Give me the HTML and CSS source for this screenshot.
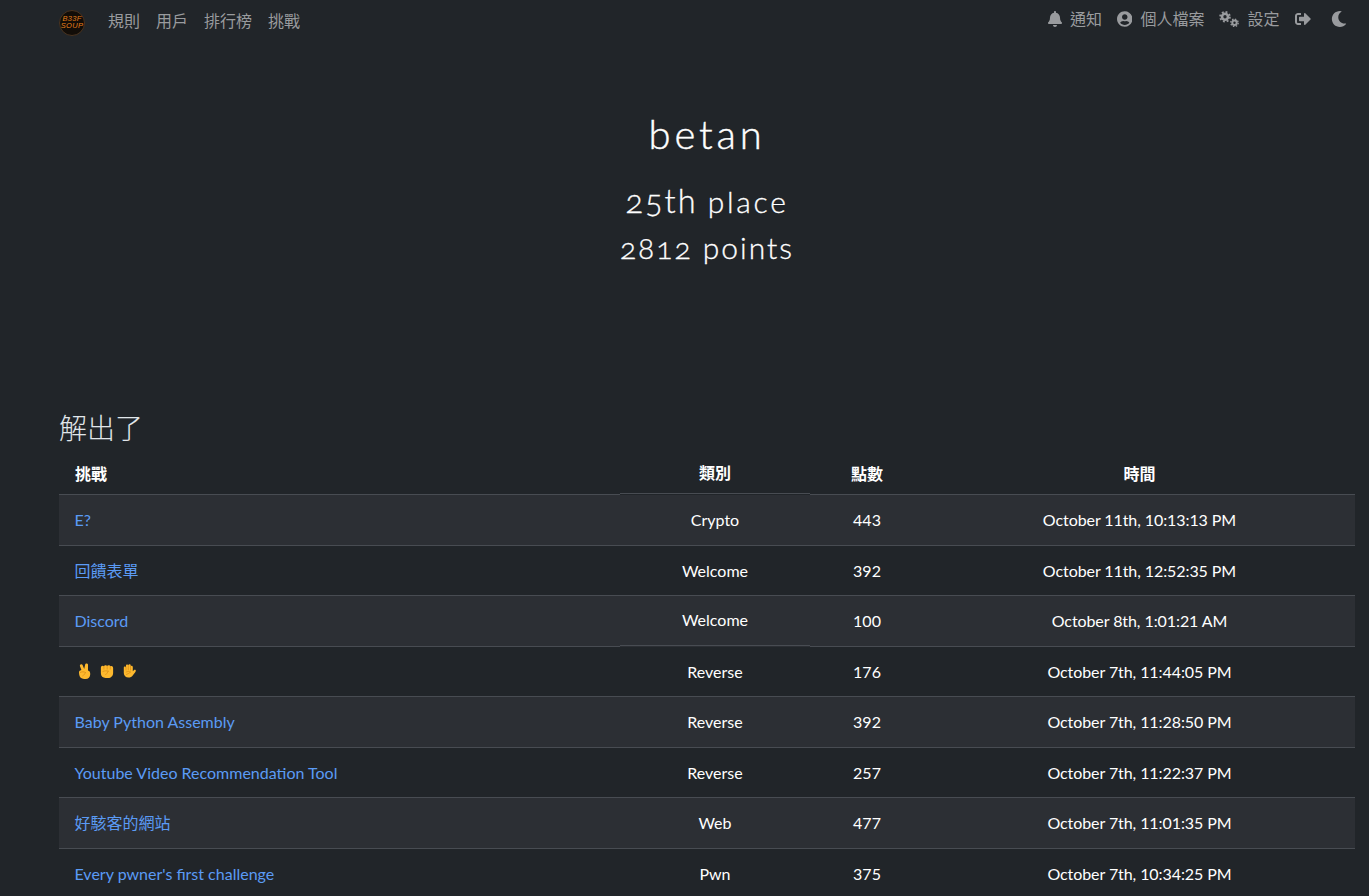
FILE: index.html
```html
<!DOCTYPE html>
<html lang="zh-Hant">
<head>
<meta charset="utf-8">
<title>betan</title>
<link rel="stylesheet" href="styles.css">
</head>
<body>
<nav class="navbar">
  <div class="nav-left">
    <a class="logo" href="#" aria-label="B33F SOUP">
      <svg viewBox="0 0 26 26" width="26" height="26">
        <circle cx="13" cy="13" r="12.5" fill="#120d08" stroke="#4a3420" stroke-width="1"/>
        <text class="logo-text" x="13" y="10.700" text-anchor="middle">B33F</text>
        <text class="logo-text" x="13" y="18.200" text-anchor="middle">SOUP</text>
      </svg>
    </a>
    <a class="nav-link" href="#">規則</a>
    <a class="nav-link" href="#">用戶</a>
    <a class="nav-link" href="#">排行榜</a>
    <a class="nav-link" href="#">挑戰</a>
  </div>
  <div class="nav-right">
    <a class="nav-link" href="#">
      <svg class="icon" viewBox="0 0 448 512"><path d="M224 512c35.32 0 63.97-28.65 63.97-64H160.03c0 35.35 28.65 64 63.97 64zm215.39-149.71c-19.32-20.76-55.47-51.99-55.47-154.29 0-77.7-54.48-139.9-127.94-155.16V32c0-17.67-14.32-32-31.98-32s-31.98 14.33-31.98 32v20.84C118.56 68.1 64.08 130.3 64.08 208c0 102.3-36.15 133.53-55.47 154.29-6 6.45-8.66 14.16-8.61 21.71.11 16.4 12.98 32 32.1 32h383.8c19.12 0 32-15.6 32.1-32 .05-7.55-2.61-15.27-8.61-21.71z"/></svg>
      <span>通知</span>
    </a>
    <a class="nav-link" href="#">
      <svg class="icon" viewBox="0 0 496 512"><path d="M248 8C111 8 0 119 0 256s111 248 248 248 248-111 248-248S385 8 248 8zm0 96c48.6 0 88 39.4 88 88s-39.4 88-88 88-88-39.4-88-88 39.4-88 88-88zm0 344c-58.7 0-111.3-26.6-146.5-68.2 18.8-35.4 55.6-59.8 98.5-59.8 2.4 0 4.8.4 7.1 1.1 13 4.2 26.6 6.9 40.9 6.9 14.3 0 28-2.7 40.9-6.9 2.3-.7 4.7-1.1 7.1-1.1 42.9 0 79.7 24.4 98.5 59.8C359.3 421.4 306.7 448 248 448z"/></svg>
      <span>個人檔案</span>
    </a>
    <a class="nav-link" href="#">
      <svg class="icon icon-cogs" viewBox="0 0 20 16">
        <circle class="gear-teeth" cx="6" cy="5.800" r="4.900"/>
        <circle class="gear-body" cx="6" cy="5.800" r="3"/>
        <circle class="gear-teeth small" cx="15.500" cy="11.800" r="3.700"/>
        <circle class="gear-body small" cx="15.500" cy="11.800" r="2.200"/>
      </svg>
      <span>設定</span>
    </a>
    <a class="nav-link" href="#" aria-label="登出">
      <svg class="icon" viewBox="0 0 512 512"><path d="M497 273L329 441c-15 15-41 4.5-41-17v-96H152c-13.3 0-24-10.7-24-24v-96c0-13.3 10.7-24 24-24h136V88c0-21.4 25.9-32 41-17l168 168c9.3 9.4 9.3 24.6 0 34zM192 436v-40c0-6.6-5.4-12-12-12H96c-17.7 0-32-14.3-32-32V160c0-17.7 14.3-32 32-32h84c6.6 0 12-5.4 12-12V76c0-6.6-5.4-12-12-12H96c-53 0-96 43-96 96v192c0 53 43 96 96 96h84c6.6 0 12-5.4 12-12z"/></svg>
    </a>
    <a class="nav-link moon" href="#" aria-label="主題">
      <svg class="icon" viewBox="0 0 512 512"><path d="M283.211 512c78.962 0 151.079-35.925 198.857-94.792 7.068-8.708-.639-21.43-11.562-19.35-124.203 23.654-238.262-71.576-238.262-196.954 0-72.222 38.662-138.635 101.498-174.394 9.686-5.512 7.25-20.197-3.756-22.23A258.156 258.156 0 0 0 283.211 0c-141.309 0-256 114.511-256 256 0 141.309 114.511 256 256 256z"/></svg>
    </a>
  </div>
</nav>

<header class="hero">
  <h1>betan</h1>
  <h2><span class="rank">25th</span> <span class="place">place</span></h2>
  <h2>2812 points</h2>
</header>

<main class="content">
  <h3>解出了</h3>
  <table class="solves">
    <colgroup>
      <col class="c-name"><col class="c-cat"><col class="c-pts"><col class="c-time">
    </colgroup>
    <thead>
      <tr><th class="left">挑戰</th><th class="raised">類別</th><th>點數</th><th>時間</th></tr>
    </thead>
    <tbody>
      <tr><td class="left"><a href="#">E?</a></td><td>Crypto</td><td>443</td><td>October 11th, 10:13:13 PM</td></tr>
      <tr><td class="left"><a href="#">回饋表單</a></td><td>Welcome</td><td>392</td><td>October 11th, 12:52:35 PM</td></tr>
      <tr><td class="left"><a href="#">Discord</a></td><td class="raised">Welcome</td><td>100</td><td>October 8th, 1:01:21 AM</td></tr>
      <tr><td class="left"><a class="hands" href="#" aria-label="✌ ✊ ✋">
        <svg class="hand" viewBox="0 0 16 16"><path class="skin" d="M3.600 1.400c.8-.5 1.700-.2 2 .7l1.600 4 .9-4.400c.2-.9 1-1.400 1.800-1.200.9.2 1.300 1 1.100 1.800L11 7.600c1.500.5 2.200 1.500 2.200 2.800v1c0 2.700-1.900 4.600-4.600 4.600H7C4.300 16 2.400 14.200 2.200 11.600L2 9.500c-.1-1 .4-1.800 1.200-2.100l1.200-.3L3 3.200c-.3-.7 0-1.400.6-1.800z"/><path class="crease" d="M3.500 9.400c1.600-.9 3.400-.8 4.800 0M5.800 12.800c1.200-.8 2.100-1.800 2.600-3.200"/></svg>
        <svg class="hand" viewBox="-.5 -.5 17 17"><path class="skin" d="M1.500 4.500C1.500 3.400 2.300 2.500 3.400 2.500c.5 0 1 .2 1.300.5.300-.7 1-1.200 1.800-1.200.7 0 1.300.3 1.700.9.300-.5.900-.9 1.600-.9.800 0 1.500.5 1.800 1.200.3-.2.600-.3 1-.3 1.100 0 1.900.9 1.900 2v5.500c0 3.200-2.300 5.300-5.300 5.300H6.500c-3 0-5-2-5-5z"/><path class="crease" d="M4.700 3v3M8.200 2.800V6M11.500 3v3M3.600 8.500c2-.9 4-.9 5.800-.3M6.500 12c1.200-1 2.300-2.300 2.800-3.800"/></svg>
        <svg class="hand" viewBox=".5 0 16 16"><path class="skin" d="M3.300 4.600c0-.6.500-1.100 1.100-1.100s1 .4 1.100 1V2.700c0-.7.500-1.200 1.200-1.200.5 0 .9.300 1.100.7.100-.6.600-1 1.200-1 .7 0 1.200.5 1.200 1.200v.9c.2-.3.500-.5.900-.5.700 0 1.200.6 1.200 1.200v4.200l1-1c.6-.6 1.400-.6 1.800-.1.400.5.300 1.200-.2 1.800l-2.700 3.500c-1 1.400-2.400 2.100-4 2.100H8c-2.700 0-4.700-1.900-4.700-4.600z"/><path class="crease" d="M5.500 4v3M7.800 2.500V7M10 3v4M5.600 9c1.500-.7 3.200-.6 4.600 0-1.300 1-2.700 2-4.200 2.500"/></svg>
      </a></td><td>Reverse</td><td>176</td><td>October 7th, 11:44:05 PM</td></tr>
      <tr><td class="left"><a href="#">Baby Python Assembly</a></td><td>Reverse</td><td>392</td><td>October 7th, 11:28:50 PM</td></tr>
      <tr><td class="left"><a href="#">Youtube Video Recommendation Tool</a></td><td>Reverse</td><td>257</td><td>October 7th, 11:22:37 PM</td></tr>
      <tr><td class="left"><a href="#">好駭客的網站</a></td><td>Web</td><td>477</td><td>October 7th, 11:01:35 PM</td></tr>
      <tr><td class="left"><a href="#">Every pwner's first challenge</a></td><td>Pwn</td><td>375</td><td>October 7th, 10:34:25 PM</td></tr>
    </tbody>
  </table>
</main>
</body>
</html>
```
FILE: styles.css
```css
* { box-sizing: border-box; }
html, body { height: 896px; overflow: hidden; }
body {
  margin: 0;
  background: #212529;
  color: #fff;
  font-family: Lato, "Noto Sans CJK TC", sans-serif;
  font-size: 16px;
  line-height: 1.5;
}
a { text-decoration: none; }

.navbar {
  display: flex;
  justify-content: space-between;
  height: 40px;
  padding: 0 14.5px 0 59px;
}
.nav-left { display: flex; align-items: center; height: 41px; }
.nav-right { display: flex; align-items: center; height: 38px; }
.logo { display: flex; margin: 5px 15px 0 0; }
.logo-text { font: italic 400 7.5px "Liberation Sans", sans-serif; letter-spacing: .3px; fill: #e8801a; }
.nav-link { display: flex; align-items: center; gap: 8px; padding: 0 7.5px; color: #999b9e; }
.nav-left .nav-link { padding: 0 8px; }
.moon { padding-left: 13px; }
.icon { height: 16px; width: auto; fill: #999b9e; }
.icon-cogs { width: 20px; }
.gear-teeth { fill: none; stroke: #999b9e; stroke-width: 1.8; stroke-dasharray: 1.9 1.95; }
.gear-teeth.small { stroke-width: 1.4; stroke-dasharray: 1.45 1.45; }
.gear-body { fill: none; stroke: #999b9e; stroke-width: 2.6; }
.gear-body.small { stroke-width: 2; }

.hero { height: 360px; padding: 69px 14px 0 59px; text-align: center; }
.hero h1 { margin: 0 0 19px; font-size: 40px; font-weight: 300; line-height: 50px; letter-spacing: 3.8px; -webkit-text-stroke: .4px #fff; }
.hero h2 { margin: 0; font-size: 30px; font-weight: 300; line-height: 46px; letter-spacing: 2px; font-variant-numeric: oldstyle-nums; -webkit-text-stroke: .3px #fff; }
.rank { font-size: 32.5px; }
.place { letter-spacing: 2.7px; }

.content { padding: 2px 14px 0 59px; }
.content h3 { margin: 0 0 7px; font-size: 28px; font-weight: 300; line-height: 52px; color: #e0e6ea; }
.solves { width: 1296px; border-collapse: separate; border-spacing: 0; table-layout: fixed; }
.c-name { width: 561px; }
.c-cat { width: 190px; }
.c-pts { width: 114px; }
.c-time { width: 431px; }
.solves th, .solves td { padding: 12px 16px; text-align: center; line-height: 25.5px; vertical-align: middle; border-bottom: 1px solid #484c52; }
.solves th { padding: 0 16px 7.5px; font-weight: 700; color: #fff; }
.solves td.left { text-align: left; padding-left: 15.5px; }
.solves th.left { text-align: left; }
.solves .raised { transform: translateY(-1px); }
.solves td:last-child { letter-spacing: -.08px; }
.solves tbody tr:nth-child(odd) { background: #2c2f34; }
.solves a { color: #5b9bf5; }
.hands { display: flex; align-items: center; gap: 6px; padding-left: 2.5px; }
.hand { width: 16px; height: 16px; }
.skin { fill: #fdb92e; }
.crease { fill: none; stroke: #d98a12; stroke-width: .7; stroke-linecap: round; }
```
